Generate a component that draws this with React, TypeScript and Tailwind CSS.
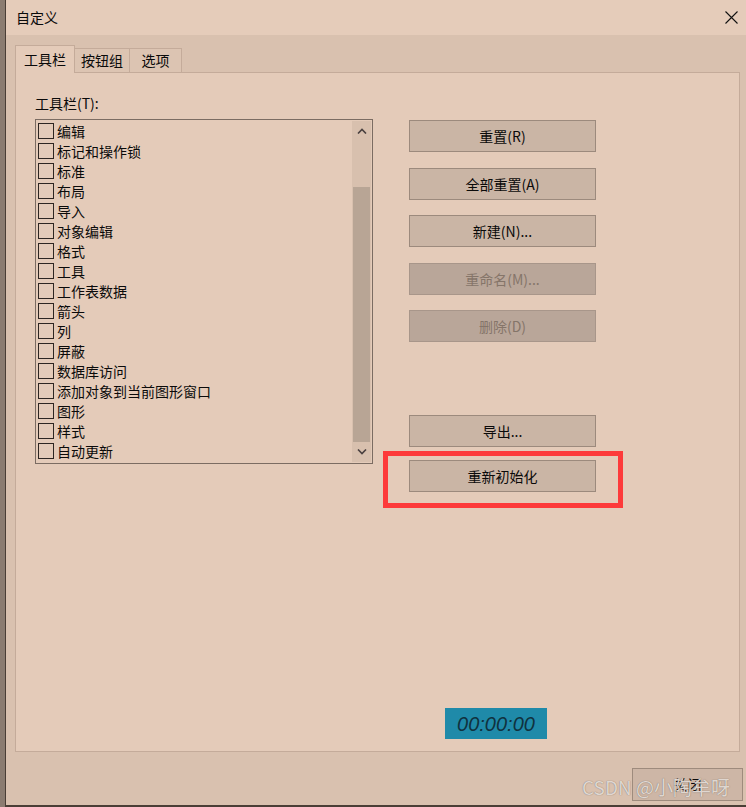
import React from 'react';

const items = [
  '编辑',
  '标记和操作锁',
  '标准',
  '布局',
  '导入',
  '对象编辑',
  '格式',
  '工具',
  '工作表数据',
  '箭头',
  '列',
  '屏蔽',
  '数据库访问',
  '添加对象到当前图形窗口',
  '图形',
  '样式',
  '自动更新',
];

const font = "font-['Noto_Sans_CJK_SC','Liberation_Sans',sans-serif]";

function Btn({ label, disabled, className = '' }: { label: string; disabled?: boolean; className?: string }) {
  return (
    <div
      className={`w-[187px] h-[32px] flex items-center justify-center border text-[14px] ${
        disabled
          ? 'bg-[#b9a699] border-[#a8968a] text-[#857569]'
          : 'bg-[#cab5a5] border-[#9c8a7d] text-[#0a0a0a]'
      } ${className}`}
    >
      {label}
    </div>
  );
}

function Chevron({ up }: { up?: boolean }) {
  return (
    <svg width="10" height="6" viewBox="0 0 10 6" className="block">
      <path
        d={up ? 'M1 5.5 L5 1.5 L9 5.5' : 'M1 0.5 L5 4.5 L9 0.5'}
        fill="none"
        stroke="#4a4040"
        strokeWidth="1.6"
      />
    </svg>
  );
}

export default function App() {
  return (
    <div className={`w-[746px] h-[807px] flex bg-[#8b7c71] ${font}`}>
      <div className="w-[5px]" />
      <div className="flex-1 flex flex-col border-l border-b-2 border-[#4a3e36]">
        {/* title bar */}
        <div className="h-[35px] flex items-center justify-between pl-[10px] pr-[8px] bg-[#e5ccba]">
          <span className="text-[14px] text-[#0a0a0a]">自定义</span>
          <svg width="13" height="13" viewBox="0 0 13 13">
            <path d="M0.5 0.5 L12.5 12.5 M12.5 0.5 L0.5 12.5" stroke="#111" strokeWidth="1.1" />
          </svg>
        </div>

        {/* body */}
        <div className="flex-1 flex flex-col bg-[#d9c1af] pt-[10px] pl-[9px] pr-[6px]">
          {/* tabs */}
          <div className="flex items-end h-[28px] relative z-10 -mb-px">
            <div className="w-[60px] h-[28px] flex items-center justify-center bg-[#e4cbb9] border border-b-0 border-[#c4ab9a] text-[14px] text-[#0a0a0a]">
              工具栏
            </div>
            <div className="w-[55px] h-[25px] flex items-center justify-center bg-[#dcc4b2] border border-l-0 border-[#c4ab9a] text-[14px] text-[#0a0a0a]">
              按钮组
            </div>
            <div className="w-[52px] h-[25px] flex items-center justify-center bg-[#dcc4b2] border border-l-0 border-[#c4ab9a] text-[14px] text-[#0a0a0a]">
              选项
            </div>
          </div>

          {/* panel */}
          <div className="h-[680px] flex flex-col bg-[#e4cbb9] border border-[#c4ab9a]">
            <div className="flex">
              <div className="pl-[19px] pt-[20px]">
                <div className="h-[20px] leading-[20px] text-[14px] text-[#0a0a0a]">工具栏(T):</div>
                <div className="mt-[6px] w-[338px] h-[345px] border border-[#7b6c62] flex">
                  <div className="flex-1 pt-px pl-[2px]">
                    {items.map((t) => (
                      <div key={t} className="h-[20px] flex items-center gap-[3px]">
                        <div className="w-[16px] h-[16px] border border-[#2e2622]" />
                        <span className="text-[14px] leading-[20px] text-[#0a0a0a]">{t}</span>
                      </div>
                    ))}
                  </div>
                  <div className="w-[19px] mr-[1px] my-px flex flex-col bg-[#d8c0ae]">
                    <div className="h-[20px] flex items-center justify-center">
                      <Chevron up />
                    </div>
                    <div className="h-[46px]" />
                    <div className="h-[255px] mx-px bg-[#b8a595]" />
                    <div className="flex-1 flex items-center justify-center">
                      <Chevron />
                    </div>
                  </div>
                </div>
              </div>

              <div className="ml-[36px] pt-[47px] flex flex-col">
                <Btn label="重置(R)" />
                <Btn label="全部重置(A)" className="mt-[16px]" />
                <Btn label="新建(N)..." className="mt-[15px]" />
                <Btn label="重命名(M)..." disabled className="mt-[16px]" />
                <Btn label="删除(D)" disabled className="mt-[15px]" />
                <Btn label="导出..." className="mt-[73px]" />
                <div className="relative mt-[13px]">
                  <Btn label="重新初始化" />
                  <div className="absolute left-[-26px] top-[-9px] w-[240px] h-[57px] border-[5px] border-[#fd3a3a]" />
                </div>
              </div>
            </div>

            <div className="mt-auto mb-[12px] ml-[429px] w-[102px] h-[31px] flex items-center justify-center bg-[#1f8aa9]">
              <span className="font-['Liberation_Sans',sans-serif] italic text-[20px] text-[#10323f]">00:00:00</span>
            </div>
          </div>

          {/* footer */}
          <div className="flex justify-end mt-[16px] -mr-[3px]">
            <div className="relative w-[111px] h-[33px] flex items-center justify-center bg-[#cdb6a6] border border-[#9e8b7d] text-[14px] text-[#0a0a0a]">
              关闭
              <span className="absolute right-[12px] top-[4px] whitespace-nowrap text-[19px] text-[#f3ebe5]/85 [text-shadow:0_0_1px_#6b5f57]">
                CSDN @小陶牟呀
              </span>
            </div>
          </div>
        </div>
      </div>
    </div>
  );
}
